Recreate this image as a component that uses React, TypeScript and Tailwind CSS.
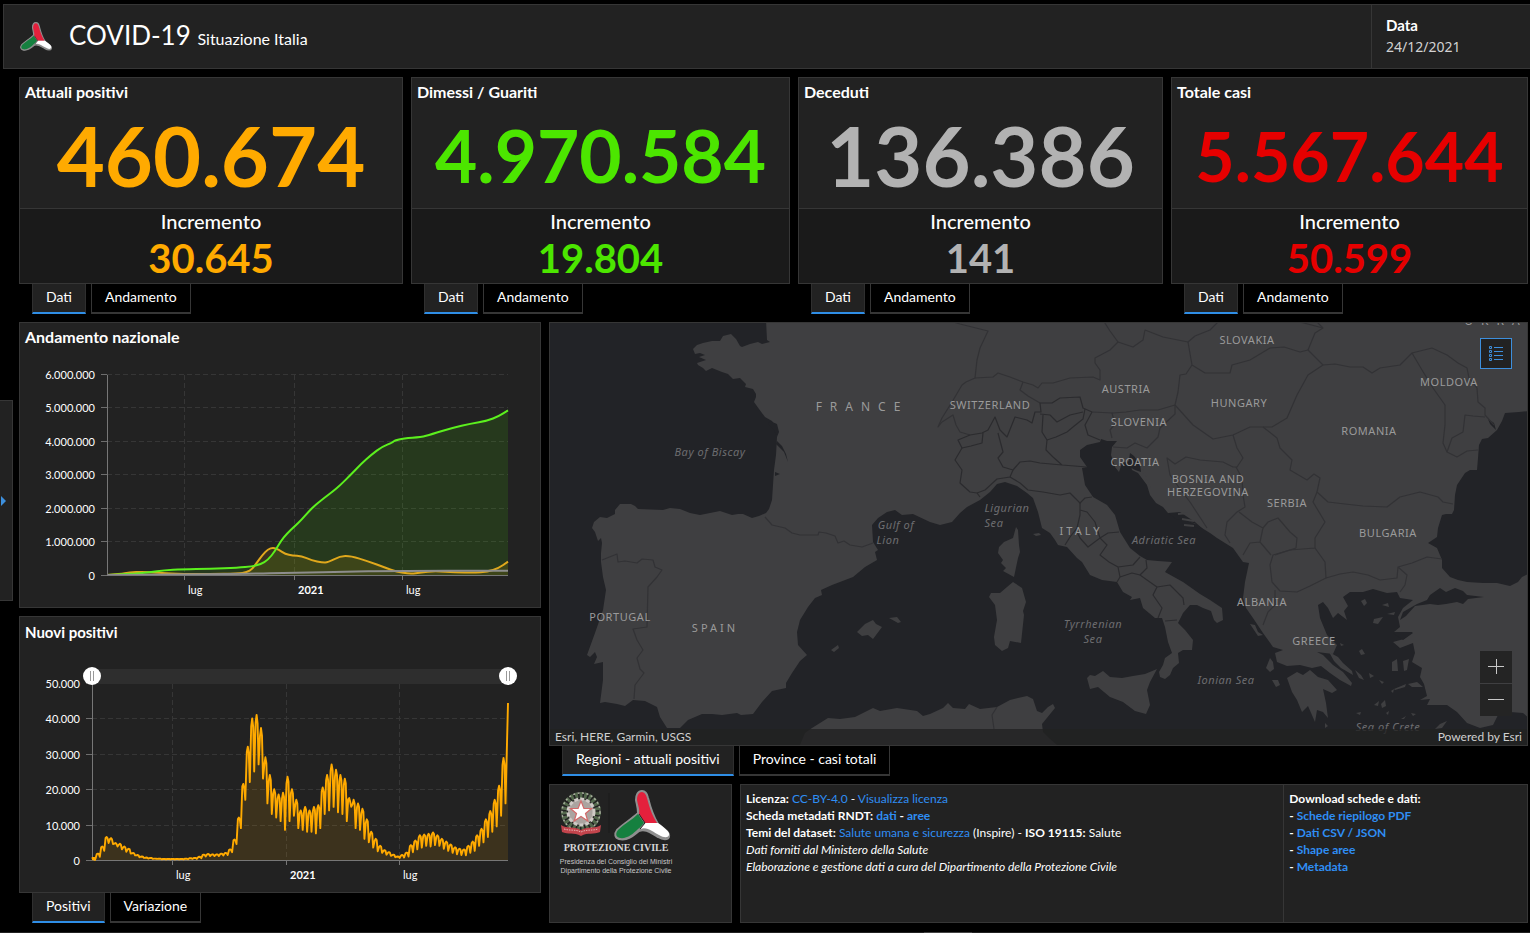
import { useState } from 'react';

interface Stat {
    title: string;
    value: string;
    increment: string;
    size: string;
    color: string;
}

interface MapLabel {
    text: string;
    x: number;
    y: number;
}

type Point = [number, number];

const stats: Stat[] = [
    { title: 'Attuali positivi', value: '460.674', increment: '30.645', size: 'text-[83px]', color: 'text-[#ffaa00]' },
    { title: 'Dimessi / Guariti', value: '4.970.584', increment: '19.804', size: 'text-[73px]', color: 'text-[#4ce600]' },
    { title: 'Deceduti', value: '136.386', increment: '141', size: 'text-[83px]', color: 'text-[#b2b2b2]' },
    { title: 'Totale casi', value: '5.567.644', increment: '50.599', size: 'text-[68px]', color: 'text-[#e60000]' },
];

// [day, millions]
const recovered: Point[] = [
    [0, 0], [37, 0.03], [72, 0.08], [95, 0.14], [125, 0.17], [172, 0.19], [218, 0.22], [242, 0.26], [256, 0.32],
    [268, 0.45], [280, 0.72], [289, 1.0], [300, 1.25], [312, 1.45], [324, 1.65], [336, 1.9], [347, 2.1], [365, 2.35],
    [376, 2.5], [388, 2.68], [406, 3.0], [423, 3.32], [441, 3.61], [458, 3.84], [476, 3.97], [479, 4.03], [494, 4.09],
    [523, 4.13], [540, 4.21], [576, 4.41], [605, 4.53], [634, 4.62], [652, 4.75], [668, 4.93],
];

const positives: Point[] = [
    [0, 0], [22, 0.03], [37, 0.08], [60, 0.1], [84, 0.07], [113, 0.03], [172, 0.03], [218, 0.04], [233, 0.08],
    [242, 0.18], [250, 0.38], [259, 0.6], [268, 0.77], [277, 0.82], [286, 0.76], [297, 0.63], [309, 0.58], [324, 0.57],
    [341, 0.44], [359, 0.37], [368, 0.38], [388, 0.56], [406, 0.57], [435, 0.41], [464, 0.22], [482, 0.1], [505, 0.03],
    [523, 0.08], [546, 0.12], [581, 0.08], [611, 0.07], [634, 0.1], [652, 0.2], [668, 0.4],
];

const deaths: Point[] = [[0, 0], [230, 0.03], [312, 0.07], [406, 0.1], [464, 0.12], [668, 0.13]];

// [weekly max, weekly min] in thousands
const weeks: Point[] = [
    [0.2, 0], [0.6, 0.3], [1.8, 0.9], [3.8, 2.6], [6.5, 4.8], [6.2, 4.5], [4.8, 3.8], [4.6, 3], [3.8, 2.3], [3.2, 1.8],
    [2, 1.3], [1.4, 0.8], [1, 0.6], [0.7, 0.4], [0.6, 0.3], [0.4, 0.3], [0.4, 0.2], [0.3, 0.2], [0.3, 0.2], [0.3, 0.2],
    [0.3, 0.2], [0.3, 0.2], [0.4, 0.2], [0.5, 0.3], [0.6, 0.3], [0.9, 0.5], [1.5, 1], [1.7, 1.1], [1.6, 1.1], [1.6, 1.1],
    [1.8, 1.3], [2, 1.4], [3, 2.2], [5.8, 4.5], [12, 9], [21.5, 17], [32, 22], [40, 25], [41, 27], [37.3, 23],
    [29, 16], [24, 13], [20, 12], [18.5, 11], [19, 8.5], [23.5, 11], [20, 12.5], [17, 9], [14, 8.5], [15, 8],
    [14, 8], [15, 7.5], [15.5, 9], [20.5, 13], [24, 14], [27, 15], [25.5, 13.5], [24, 13], [23, 11], [17.5, 15],
    [17, 9], [16, 8.5], [14.5, 6], [11.5, 5], [8, 3.5], [6, 2.5], [4, 2], [2.8, 1.5], [2.2, 1.2], [1.5, 0.8],
    [1, 0.6], [1.4, 0.7], [2.1, 1], [4.2, 2.2], [5.5, 3], [7, 3.5], [7.2, 4], [7.4, 3.8], [7.8, 4.2], [7, 4],
    [6, 3.2], [5.2, 2.6], [4.4, 2], [3.6, 1.6], [3.2, 1.4], [3, 1.3], [4, 2], [5.2, 2.6], [7, 4], [8.8, 5],
    [11.5, 6.5], [13.8, 8], [17, 9.5], [21, 12.5], [28.8, 16],
];

const toPath = (points: Point[]) => 'M' + points.map(([x, y]) => `${x.toFixed(1)},${y.toFixed(1)}`).join('L');

// Curve through the midpoints, so the slow series have no corners
const toCurve = (points: Point[]) => {
    const [first, ...rest] = points;
    const last = rest[rest.length - 1];
    const mids = rest.slice(0, -1).map(([x, y], i) => {
        const [nx, ny] = rest[i + 1];
        return `Q${x.toFixed(1)},${y.toFixed(1)} ${((x + nx) / 2).toFixed(1)},${((y + ny) / 2).toFixed(1)}`;
    });
    return `M${first[0]},${first[1]}${mids.join('')}L${last[0]},${last[1].toFixed(1)}`;
};

const scaleTrend = (points: Point[]): Point[] => points.map(([d, v]) => [87 + (d / 668) * 401, 225 - v * 33.4]);

const dailyPoints: Point[] = [];
weeks.forEach(([max, min], i) => {
    const x = Math.max(72, 68 + i * 4.41);
    const y = (v: number) => 214 - v * 3.54;
    dailyPoints.push([x, y(max * 0.85 + min * 0.15)], [x + 1, y(max)], [x + 2, y(max * 0.94)], [x + 3, y(min)]);
});
dailyPoints.push([488, 57]);

const land = {
    mainland:
        'M766,320L767,340 770,342 762,344 758,342 750,344 742,347 740,346 736,339 731,334 723,336 720,341 712,341 703,343 697,345 693,349 695,354 700,353 705,355 699,357 706,360 697,363 698,365 703,368 706,371 712,368 722,372 728,374 733,379 740,378 746,384 745,387 753,389 756,394 756,397 754,402 759,409 765,417 772,421 776,427 777,437 776,455 774,470 773,485 772,500 769,509 766,513 759,516 752,518 743,514 738,514 732,515 726,513 720,511 710,513 700,515 690,513 680,509 670,508 663,510 638,509 635,506 631,504 620,504 615,510 615,514 607,518 600,517 594,522 592,528 595,532 598,541 601,538 602,543 601,553 601,562 603,577 606,590 603,610 595,633 587,655 590,657 595,652 597,657 594,664 603,662 603,680 600,703 605,702 617,704 625,706 633,700 645,701 657,707 660,717 667,728 680,728 688,720 702,714 712,714 722,715 737,713 741,715 753,714 762,702 772,691 786,688 786,683 792,673 800,661 807,655 798,645 797,632 800,620 808,607 815,598 822,595 821,590 832,585 853,577 865,567 877,560 875,552 878,550 873,542 872,525 878,518 887,512 895,510 902,515 913,514 930,522 940,525 952,522 960,513 967,507 980,500 990,492 997,484 1005,482 1017,486 1027,493 1033,498 1038,512 1042,528 1050,533 1055,540 1058,545 1067,547 1077,558 1082,562 1090,575 1102,580 1117,582 1123,592 1132,597 1130,600 1140,598 1143,608 1155,618 1162,618 1165,627 1168,642 1172,653 1165,658 1163,665 1159,672 1160,677 1165,679 1170,675 1173,668 1179,663 1178,653 1183,650 1192,650 1193,640 1185,630 1178,623 1183,613 1190,605 1197,605 1203,608 1211,611 1214,620 1217,623 1223,620 1222,608 1210,600 1200,594 1183,582 1165,572 1172,562 1158,561 1147,560 1140,556 1130,548 1120,532 1115,515 1107,505 1093,497 1085,485 1082,468 1087,467 1080,457 1080,450 1087,445 1100,442 1101,439 1107,441 1117,441 1112,447 1111,455 1115,467 1119,472 1122,463 1130,461 1132,470 1138,473 1147,485 1150,495 1156,503 1163,507 1168,513 1180,515 1187,520 1197,525 1210,533 1217,538 1233,548 1243,562 1249,563 1245,582 1243,598 1246,608 1253,618 1263,633 1273,647 1283,650 1275,653 1277,662 1287,666 1300,665 1312,668 1321,666 1330,673 1340,680 1351,686 1352,683 1343,672 1333,665 1323,655 1317,652 1333,654 1337,645 1327,635 1320,618 1318,605 1323,602 1328,608 1333,618 1338,613 1347,620 1344,611 1348,606 1343,597 1350,592 1363,592 1373,589 1387,593 1397,592 1400,598 1413,600 1403,608 1398,617 1400,627 1394,632 1413,632 1404,639 1393,642 1400,648 1413,643 1415,653 1412,662 1422,668 1420,677 1424,684 1427,696 1420,700 1430,699 1427,705 1447,705 1457,712 1467,723 1480,728 1493,725 1498,715 1510,712 1523,713 1530,719 1530,320Z',
    peloponnese:
        'M1287,678L1297,672 1303,675 1310,670 1318,677 1328,680 1337,690 1332,693 1323,689 1326,703 1328,718 1323,712 1317,710 1315,722 1308,706 1302,712 1297,700 1292,692Z',
    africa:
        'M800,745L805,733 812,728 828,718 840,719 855,717 873,708 880,711 897,708 917,711 923,716 930,714 943,708 948,703 953,708 965,709 969,704 980,709 997,707 1010,700 1018,698 1027,696 1033,699 1037,711 1042,713 1048,707 1053,704 1055,708 1042,724 1043,732 1050,739 1057,745Z',
    corsica: 'M1016,527L1018,530 1019,545 1020,552 1018,558 1014,577 1003,571 1006,568 1001,563 1003,560 998,553 999,547 1004,542 1013,538Z',
    sardinia:
        'M1013,582L1022,588 1026,602 1023,611 1024,615 1021,643 1010,641 1008,648 1002,651 995,645 994,637 997,620 995,605 989,597 991,593 1000,593 1007,587Z',
    sicily: 'M1087,678L1090,675 1095,676 1103,671 1110,677 1122,678 1133,676 1145,674 1157,669 1150,682 1147,690 1150,705 1146,714 1135,711 1123,702 1110,697 1098,687 1090,689Z',
    balearics: 'M857,632L865,624 873,620 876,624 882,627 873,639 868,635 862,636ZM831,650L838,645 839,648 834,652ZM889,618L897,617 901,622 898,623Z',
    ionian: 'M1250,624L1255,625 1258,632 1263,635 1258,636ZM1266,668L1270,658 1273,662 1274,669 1270,672ZM1272,680L1278,680 1280,685 1276,687ZM1033,534L1039,533 1041,535 1036,536Z',
    aegean: 'M1361,601L1365,599 1367,603 1364,606ZM1382,605L1388,603 1389,607ZM1387,614L1395,612 1394,615ZM1374,619L1383,617 1378,624 1373,623ZM1340,643L1344,645 1341,646ZM1359,651L1362,649 1365,654 1361,655ZM1329,652L1338,657 1343,663 1352,671 1353,675 1341,668 1334,661ZM1392,662L1397,659 1398,671 1392,671ZM1403,661L1409,659 1407,670 1404,671ZM1355,670L1361,675 1364,680 1359,678ZM1369,673L1374,676 1370,678ZM1379,680L1384,682 1382,684ZM1394,689L1406,684 1405,687 1395,690ZM1408,684L1417,682 1423,687 1412,687ZM1374,705L1379,701 1378,706ZM1381,704L1385,700 1386,706 1382,708ZM1391,691L1394,689 1393,693ZM1356,713L1361,712 1360,715ZM1386,713L1389,711 1388,715ZM1401,719L1406,716 1404,719ZM1411,713L1416,714 1413,716ZM1435,729L1440,724 1447,721 1442,728ZM1325,723L1328,726 1325,728Z',
};

const inlandSea = {
    black: 'M1530,411L1519,412 1505,413 1502,421 1497,430 1488,438 1482,439 1479,445 1478,458 1477,470 1470,470 1465,473 1457,485 1455,495 1454,510 1452,514 1446,514 1442,515 1438,528 1437,537 1428,543 1437,548 1442,560 1442,568 1450,577 1458,580 1467,582 1483,583 1497,583 1510,586 1518,582 1522,577 1530,573Z',
    marmara: 'M1403,612L1417,604 1427,600 1430,595 1440,588 1446,592 1455,588 1463,591 1467,595 1484,597 1468,599 1463,604 1457,602 1446,604 1438,605 1430,604 1415,606 1406,616 1400,620Z',
    gulfs: 'M1130,453L1134,456 1140,464 1141,472 1135,470 1128,466ZM770,421L777,424 779,432 777,437 774,430 768,424ZM777,441L782,446 786,454 788,462 784,452 776,444ZM1168,513L1180,512 1195,522 1203,529 1192,527 1196,524 1185,520 1176,519ZM1393,633L1413,633 1403,640ZM1488,419L1494,423 1496,430 1490,424ZM775,472L780,474 775,476Z',
};

const borders = [
    'M602,560L617,554 618,562 625,561 637,563 642,559 653,560 655,567 662,570 657,577 648,587 647,627 633,629 637,640 643,650 637,658 640,669 644,673 635,685 634,699',
    'M765,517L772,525 785,528 792,533 800,535 818,535 819,532 826,533 835,536 838,543 844,541 850,545 862,547 873,543',
    'M947,320L960,324 988,331 980,348 977,360 975,378 966,382 962,385 952,402 942,418 938,427 942,422 953,415 956,425 960,432 970,435',
    'M975,378L993,377 998,373 1010,377 1023,382 1033,385 1038,388 1042,383 1053,383 1070,378 1093,377 1100,380 1100,370 1095,363 1095,358 1110,350 1118,342 1110,331 1103,320',
    'M1118,342L1133,347 1143,340 1145,330 1163,337 1188,342 1195,336 1210,330 1218,322',
    'M1188,342L1192,365 1186,374 1180,375 1178,392 1175,405 1193,425 1213,439 1233,435 1250,427 1272,427 1287,418 1297,395 1308,375 1323,365 1308,350 1300,352 1284,347 1270,348 1250,360 1232,365 1230,373 1205,373 1192,365',
    'M1308,350L1315,333 1323,328 1300,322M1315,320L1323,328',
    'M1175,405L1158,410 1140,410 1126,412 1113,413 1092,412',
    'M1323,365L1335,364 1350,367 1363,367 1372,373 1380,368 1400,365 1412,353 1432,348 1447,355 1458,363 1467,368 1469,378 1477,388 1478,402 1485,408 1485,415 1494,425M1485,417L1473,416 1465,415 1463,432 1452,438 1447,452 1457,457 1467,451 1478,450',
    'M1412,353L1422,370 1433,388 1445,405 1445,425 1443,443 1447,452',
    'M1263,427L1277,438 1280,448 1292,460 1290,470 1307,480 1314,474 1320,478 1317,492 1328,502 1345,504 1363,506 1387,507 1400,497 1420,492 1438,497 1443,502 1453,504',
    'M1317,492L1313,502 1325,522 1315,538 1315,548 1325,562 1326,578 1310,586 1297,592 1280,591 1272,582 1270,565 1273,555 1290,550 1315,548',
    'M1326,578L1340,574 1353,572 1368,575 1380,580 1397,578 1398,567 1412,563 1427,557 1442,559M1398,567L1407,575 1405,585 1400,592',
    'M1233,435L1237,448 1243,458 1237,467 1233,467 1223,462 1200,460 1186,457 1175,464 1167,458 1170,475 1180,489 1190,502 1207,528',
    'M1236,467L1242,478 1243,495 1245,507 1237,512 1227,522 1225,535 1230,543M1239,512L1252,522 1263,528 1260,542 1250,543 1243,555M1260,542L1271,555M1275,590L1275,605 1268,612 1263,625',
    'M1263,528L1268,522 1278,518 1290,532 1297,538 1296,548 1275,555',
    'M1113,447L1127,448 1135,443 1147,448 1158,437 1160,428 1175,414 1175,405M1112,438L1110,430 1115,424 1112,413',
    'M1023,382L1020,390 1028,396 1040,403M997,707L992,715 994,729',
];

const regions = [
    'M1092,412L1083,408 1080,397 1060,398 1052,403 1040,403 1041,412 1035,412 1032,423 1027,420 1015,417 1007,437 1000,430 995,417 988,430 982,433 970,435 958,440 962,448 955,460 962,470 960,483 970,492 977,493 980,497',
    'M962,448L971,446 982,443 983,433M998,433L1003,452 998,458 1003,467 1013,470 1010,477 997,479 985,490 977,493',
    'M1013,470L1020,462 1030,461 1040,463 1062,465 1087,467M1043,415L1042,432 1047,440 1046,450 1053,457 1062,465',
    'M1040,414L1050,415 1057,422 1070,415 1083,412M1047,440L1056,437 1067,432 1073,427 1083,419 1085,409M1092,412L1085,425 1088,435 1100,440',
    'M1010,477L1020,483 1028,490 1043,492 1060,495 1070,493 1080,503 1085,498 1092,497',
    'M1080,503L1080,515 1077,528 1070,537 1065,545M1080,510L1087,512 1095,522 1100,538 1088,547 1080,538 1076,530M1100,538L1108,533 1119,532',
    'M1100,538L1107,545 1100,555 1109,562 1118,567 1133,565 1140,557M1118,567L1120,577 1117,582M1120,577L1132,573 1140,575 1147,568 1146,560',
    'M1140,575L1147,580 1157,587 1170,585 1183,598 1184,605M1157,587L1153,595 1162,608 1158,618M1165,621L1177,620',
];

const countries: MapLabel[] = [
    { text: 'SWITZERLAND', x: 990, y: 409 },
    { text: 'AUSTRIA', x: 1126, y: 393 },
    { text: 'SLOVENIA', x: 1139, y: 426 },
    { text: 'CROATIA', x: 1135, y: 466 },
    { text: 'BOSNIA AND', x: 1208, y: 483 },
    { text: 'HERZEGOVINA', x: 1208, y: 496 },
    { text: 'SLOVAKIA', x: 1247, y: 344 },
    { text: 'HUNGARY', x: 1239, y: 407 },
    { text: 'ROMANIA', x: 1369, y: 435 },
    { text: 'MOLDOVA', x: 1449, y: 386 },
    { text: 'SERBIA', x: 1287, y: 507 },
    { text: 'BULGARIA', x: 1388, y: 537 },
    { text: 'ALBANIA', x: 1262, y: 606 },
    { text: 'GREECE', x: 1314, y: 645 },
    { text: 'PORTUGAL', x: 620, y: 621 },
];

const seas: MapLabel[] = [
    { text: 'Bay of Biscay', x: 710, y: 456 },
    { text: 'Gulf of', x: 896, y: 529 },
    { text: 'Lion', x: 888, y: 544 },
    { text: 'Ligurian', x: 1007, y: 512 },
    { text: 'Sea', x: 994, y: 527 },
    { text: 'Adriatic Sea', x: 1164, y: 544 },
    { text: 'Tyrrhenian', x: 1093, y: 628 },
    { text: 'Sea', x: 1093, y: 643 },
    { text: 'Ionian Sea', x: 1226, y: 684 },
    { text: 'Sea of Crete', x: 1388, y: 731 },
];

function Tabs({ items, label }: { items: string[]; label: string }) {
    const [active, setActive] = useState(0);

    return (
        <div role="tablist" aria-label={label} className="flex gap-[5px] pl-[13px]">
            {items.map((item, i) => (
                <button
                    key={item}
                    role="tab"
                    aria-selected={i === active}
                    onClick={() => setActive(i)}
                    className={`h-[30px] border-x border-b-2 px-[13px] pb-0.5 text-sm leading-5 ${
                        i === active
                            ? 'border-x-[#2f2f2f] border-b-[#2f8ee6] bg-[#222]'
                            : 'border-[#363636] bg-black'
                    }`}
                >
                    {item}
                </button>
            ))}
        </div>
    );
}

function StatCard({ stat }: { stat: Stat }) {
    return (
        <section>
            <div className="border border-[#363636] bg-[#222] text-center">
                <h2 className="px-[5px] pt-1 pb-px text-left text-base leading-5 font-bold">{stat.title}</h2>
                <p className={`leading-[105px] font-bold ${stat.size} ${stat.color}`}>{stat.value}</p>
                <div className="border-t border-[#363636] bg-[#1a1a1a]">
                    <p className="text-xl leading-6 font-medium">Incremento</p>
                    <p className={`text-[40px] leading-[50px] font-bold ${stat.color}`}>{stat.increment}</p>
                </div>
            </div>
            <Tabs items={['Dati', 'Andamento']} label={stat.title} />
        </section>
    );
}

// Three-armed star of the Protezione Civile
function StarShapes() {
    return (
        <>
            <path
                d="M28 1c-4 0-6 4-6 9 1 5 2 8 2 13C18 29 9 34 3 40c-3 4-2 8 2 9 8 2 14-3 20-8 7-3 13 3 19 6 5 3 10 3 11 0 1-4-3-7-11-13C39 26 37 20 34 8c-1-5-3-7-6-7z"
                fill="#8f8f8f"
                stroke="#8f8f8f"
                strokeWidth="2"
                strokeLinejoin="round"
            />
            <path d="M28 2c-3 0-5 3-5 8 1 6 3 9 2 14l6 9h12C38 25 36 19 33 8c-1-4-3-6-5-6z" fill="#e4203c" />
            <path d="M24 24C18 30 10 34 4 40c-3 4-2 7 2 8 7 1 13-4 18-9 3-2 4-4 6-6z" fill="#15803f" />
            <path d="M31 33h13c8 6 12 9 11 12-1 3-5 3-10 0-6-3-12-9-19-6z" fill="#fff" />
            <path d="M25 24l6 9-5 6" fill="none" stroke="#222" strokeWidth="1" />
        </>
    );
}

function DeptLogo() {
    return (
        <svg viewBox="0 0 116 86" className="w-[116px] overflow-visible" role="img" aria-label="Protezione Civile">
            <g fill="none">
                <circle cx="23" cy="23" r="17" stroke="#53684c" strokeWidth="6" strokeDasharray="3 1.6" />
                <circle cx="23" cy="23" r="19" stroke="#a9ae9e" strokeWidth="1.5" strokeDasharray="2 2.5" />
                <circle cx="23" cy="23" r="13" fill="#aaa4a0" stroke="#cfcac6" strokeWidth="3" strokeDasharray="4 2" />
            </g>
            <path d="M23 12l2.9 7.5h7.6l-6 5 2.3 7.5-6.800-4.600-6.800 4.600 2.300-7.500-6-5h7.600z" fill="#fff" stroke="#d26a6a" strokeWidth="1.2" />
            <path d="M3 36c6 4 12 1 20 5 8-4 14-1 20-5l-1 7c-6 3-12 0-19 4-7-4-13-1-19-4z" fill="#c2444c" />
            <path d="M6 40c6 2 11 0 17 3 6-3 11-1 17-3" fill="none" stroke="#e9b5b5" strokeDasharray="1.5 1" />
            <path d="M51 4v40" stroke="#1a1a1a" />
            <g transform="translate(56 1)">
                <StarShapes />
            </g>
            <text x="58" y="62" textAnchor="middle" fontSize="10" className="fill-[#d6d6d6] font-['Liberation_Serif',serif] font-bold">
                PROTEZIONE CIVILE
            </text>
            <g fontSize="7" textAnchor="middle" className="fill-[#c8c8c8] font-['Liberation_Sans_Narrow','Liberation_Sans',sans-serif]">
                <text x="58" y="75">Presidenza del Consiglio dei Ministri</text>
                <text x="58" y="84">Dipartimento della Protezione Civile</text>
            </g>
        </svg>
    );
}

function TrendChart() {
    const green = toCurve(scaleTrend(recovered));
    const orange = toCurve(scaleTrend(positives));
    const gray = toCurve(scaleTrend(deaths));
    const ticks = ['0', '1.000.000', '2.000.000', '3.000.000', '4.000.000', '5.000.000', '6.000.000'];

    return (
        <svg viewBox="0 0 520 257" className="block w-full fill-white text-[11px]" role="img" aria-label="Andamento nazionale">
            {ticks.map((tick, i) => {
                const y = 225.5 - Math.round(i * 33.5);
                return (
                    <g key={tick}>
                        <path d={`M87,${y}H488`} stroke="#363636" strokeDasharray="5 3" />
                        <path d={`M81,${y}h6`} stroke="#6e6e6e" />
                        <text x="75" y={y + 4} textAnchor="end">{tick}</text>
                    </g>
                );
            })}
            <path d="M164.5,25V225M274.5,25V225M382.5,25V225" stroke="#363636" strokeDasharray="5 3" />
            <path d={`${green}V225H87Z`} fill="#4ce600" fillOpacity="0.12" />
            <path d={`${orange}V225H87Z`} fill="#ffaa00" fillOpacity="0.11" />
            <g fill="none" strokeWidth="2" strokeLinejoin="round">
                <path d={orange} stroke="#e0a81c" />
                <path d={green} stroke="#5cf01e" />
                <path d={gray} stroke="#8d8d8d" />
            </g>
            <path d="M87.5,25V225.5H488M164.5,226v4M274.5,226v4M382.5,226v4" fill="none" stroke="#777" />
            <text x="168" y="244">lug</text>
            <text x="278" y="244" className="font-bold">2021</text>
            <text x="386" y="244">lug</text>
        </svg>
    );
}

function DailyChart() {
    const line = toPath(dailyPoints);
    const ticks = ['0', '10.000', '20.000', '30.000', '40.000', '50.000'];

    return (
        <svg viewBox="0 0 520 208" className="block w-full overflow-visible fill-white text-[11px]" role="img" aria-label="Nuovi positivi">
            <g transform="translate(0 -38)">
                {ticks.map((tick, i) => {
                    const y = 214.5 - Math.round(i * 35.4);
                    return (
                        <g key={tick}>
                            <path d={`M72,${y}H488`} stroke="#363636" strokeDasharray="5 3" />
                            <path d={`M66,${y}h6`} stroke="#6e6e6e" />
                            <text x="60" y={y + 4} textAnchor="end">{tick}</text>
                        </g>
                    );
                })}
                <path d="M152.5,38V214M266.5,38V214M379.5,38V214" stroke="#363636" strokeDasharray="5 3" />
                <path d={`${line}V214H72Z`} fill="#ffaa00" fillOpacity="0.12" />
                <path d="M72.5,38V214.5H488M152.5,215v4M266.5,215v4M379.5,215v4" fill="none" stroke="#777" />
                <path d={line} fill="none" stroke="#ffaa00" strokeWidth="1.9" strokeLinejoin="round" />
                <text x="156" y="233">lug</text>
                <text x="270" y="233" className="font-bold">2021</text>
                <text x="383" y="233">lug</text>
            </g>
        </svg>
    );
}

const thumb =
    'pointer-events-none absolute top-[-2px] left-[-9px] h-[18px] w-[calc(100%+18px)] appearance-none bg-transparent [&::-webkit-slider-thumb]:pointer-events-auto [&::-webkit-slider-thumb]:size-[18px] [&::-webkit-slider-thumb]:appearance-none [&::-webkit-slider-thumb]:rounded-full [&::-webkit-slider-thumb]:bg-white [&::-webkit-slider-thumb]:bg-[linear-gradient(to_right,transparent_7px,#999_7px,#999_8px,transparent_8px,transparent_10px,#999_10px,#999_11px,transparent_11px)] [&::-webkit-slider-thumb]:bg-[length:18px_10px] [&::-webkit-slider-thumb]:bg-no-repeat [&::-webkit-slider-thumb]:bg-center';

function RangeSlider() {
    const [from, setFrom] = useState(0);
    const [to, setTo] = useState(100);

    return (
        <div className="relative mt-[24px] mr-[32px] ml-[72px] h-[15px] bg-[#2e2e2e]">
            <input type="range" aria-label="Inizio" value={from} onChange={(e) => setFrom(Number(e.target.value))} className={thumb} />
            <input type="range" aria-label="Fine" value={to} onChange={(e) => setTo(Number(e.target.value))} className={thumb} />
        </div>
    );
}

function EuropeMap() {
    return (
        <div className="relative min-h-[320px] flex-1 overflow-hidden border border-[#363636] bg-[#222327]">
            <svg
                viewBox="550 323 977 422"
                preserveAspectRatio="xMidYMid slice"
                className="absolute inset-0 size-full font-['Noto_Sans',sans-serif] text-[11px]"
                role="img"
                aria-label="Mappa"
            >
                <g fill="#3f3f41">
                    {Object.entries(land).map(([name, d]) => (
                        <path key={name} d={d} />
                    ))}
                </g>
                <g fill="#222327">
                    {Object.entries(inlandSea).map(([name, d]) => (
                        <path key={name} d={d} />
                    ))}
                </g>
                <path d="M1142,470l5,6M1146,480l4,8M1178,514l10,-1M1182,519l12,2M1184,525l10,1" stroke="#3f3f41" strokeWidth="2" />
                <g fill="none" stroke="#323235" strokeWidth="1.2" strokeLinejoin="round">
                    {borders.map((d) => (
                        <path key={d} d={d} />
                    ))}
                </g>
                <g fill="none" stroke="#2b2b2e" strokeWidth="1.2" strokeLinejoin="round">
                    {regions.map((d) => (
                        <path key={d} d={d} />
                    ))}
                </g>
                <g textAnchor="middle" className="fill-[#9a9a9a] tracking-wider">
                    {countries.map((c) => (
                        <text key={c.text} x={c.x} y={c.y}>{c.text}</text>
                    ))}
                    <text x="715" y="632" className="tracking-[3px]">SPAIN</text>
                    <text x="1081" y="535" className="tracking-[3px]">ITALY</text>
                    <text x="862" y="411" className="text-[12px] tracking-[8px]">FRANCE</text>
                    <text x="1496" y="325" className="text-[12px] tracking-[8px]">UKRA</text>
                </g>
                <g textAnchor="middle" className="fill-[#6d6d70] tracking-wider italic">
                    {seas.map((s) => (
                        <text key={`${s.text}${s.y}`} x={s.x} y={s.y}>{s.text}</text>
                    ))}
                </g>
            </svg>
            <button aria-label="Legenda" className="absolute top-[15px] right-[15px] grid h-[31px] w-8 place-items-center border border-[#3d8fdd] bg-[#222]">
                <svg width="16" height="16" viewBox="0 0 16 16" fill="none" stroke="#3d8fdd" aria-hidden="true">
                    <path d="M6 1.5h9M6 5.5h9M6 9.5h9M6 13.5h9" />
                    <path d="M1.5 0.5h2v2h-2zM1.5 4.5h2v2h-2zM1.5 8.5h2v2h-2zM1.5 12.5h2v2h-2z" />
                </svg>
            </button>
            <div className="absolute right-[15px] bottom-[29px] flex w-8 flex-col gap-px">
                <button aria-label="Ingrandisci" className="grid h-8 place-items-center bg-[#242424]">
                    <svg width="16" height="16" viewBox="0 0 16 16" stroke="#c8c8c8" aria-hidden="true">
                        <path d="M0 7.5h16M8.5 0v15" />
                    </svg>
                </button>
                <button aria-label="Riduci" className="grid h-8 place-items-center bg-[#242424]">
                    <svg width="16" height="16" viewBox="0 0 16 16" stroke="#c8c8c8" aria-hidden="true">
                        <path d="M0 7.5h16" />
                    </svg>
                </button>
            </div>
            <div className="absolute inset-x-0 bottom-0 flex justify-between bg-[#222]/80 px-[5px] text-xs leading-4 text-[#cfcfcf]">
                <span>Esri, HERE, Garmin, USGS</span>
                <span>Powered by Esri</span>
            </div>
        </div>
    );
}

function Link({ children }: { children: string }) {
    return <a href="#" className="text-[#2f8ef4]">{children}</a>;
}

export default function App() {
    return (
        <div className="flex min-h-screen flex-col bg-black pt-1 font-['Lato',sans-serif] text-white">
            {/* Intestazione */}
            <header className="ml-[3px] flex border-y border-l border-[#363636] bg-[#222]">
                <div className="flex flex-1 items-center px-4">
                    <svg viewBox="0 0 58 51" className="w-[33px]" aria-hidden="true">
                        <StarShapes />
                    </svg>
                    <h1 className="ml-4 pb-1 text-[26px] leading-9">
                        COVID-19 <span className="text-base">Situazione Italia</span>
                    </h1>
                </div>
                <div className="w-[159px] border-l border-[#363636] px-3.5 pt-[10px] pb-[11px]">
                    <p className="text-[15px] leading-[21px] font-bold">Data</p>
                    <p className="font-['Noto_Sans',sans-serif] text-sm leading-[21px] text-[#d2d2d2]">24/12/2021</p>
                </div>
            </header>

            <div className="flex flex-1">
                <button
                    aria-label="Apri pannello"
                    className="h-[201px] w-[13px] shrink-0 self-center border border-l-0 border-[#363636] bg-[#222]"
                >
                    <svg width="6" height="10" viewBox="0 0 6 10" aria-hidden="true">
                        <path d="M1 0l5 5-5 5z" fill="#3d8fdd" />
                    </svg>
                </button>

                <main className="flex min-w-0 flex-1 flex-col gap-2 pt-2 pr-0.5 pb-[9px] pl-1.5">
                    {/* Indicatori */}
                    <div className="grid grid-cols-[384fr_379fr_365fr_357fr] gap-2">
                        {stats.map((stat) => (
                            <StatCard key={stat.title} stat={stat} />
                        ))}
                    </div>

                    <div className="grid flex-1 grid-cols-[522fr_979fr] gap-2">
                        {/* Grafici */}
                        <div className="flex flex-col gap-2">
                            <section className="border border-[#363636] bg-[#222]">
                                <h2 className="px-[5px] pt-1 pb-[3px] text-base leading-5 font-bold">Andamento nazionale</h2>
                                <TrendChart />
                            </section>
                            <section>
                                <div className="border border-[#363636] bg-[#222]">
                                    <h2 className="px-[5px] pt-[5px] pb-[3px] text-[15px] leading-5 font-bold">Nuovi positivi</h2>
                                    <RangeSlider />
                                    <DailyChart />
                                </div>
                                <Tabs items={['Positivi', 'Variazione']} label="Nuovi positivi" />
                            </section>
                        </div>

                        {/* Mappa e informazioni */}
                        <div className="flex min-w-0 flex-col gap-2">
                            <section className="flex flex-1 flex-col">
                                <EuropeMap />
                                <Tabs items={['Regioni - attuali positivi', 'Province - casi totali']} label="Mappa" />
                            </section>
                            <div className="grid grid-cols-[183fr_788fr] gap-2 text-[12px] leading-[17px]">
                                <div className="min-h-[139px] border border-[#363636] bg-[#222] px-2 pt-1">
                                    <DeptLogo />
                                </div>
                                <div className="grid grid-cols-[543fr_244fr] border border-[#363636] bg-[#222]">
                                    <div className="px-[5px] pt-[5px]">
                                        <p><b>Licenza:</b> <Link>CC-BY-4.0</Link> - <Link>Visualizza licenza</Link></p>
                                        <p className="font-bold">Scheda metadati RNDT: <Link>dati</Link> - <Link>aree</Link></p>
                                        <p>
                                            <b>Temi del dataset:</b> <Link>Salute umana e sicurezza</Link> (Inspire) - <b>ISO 19115:</b> Salute
                                        </p>
                                        <p className="italic">Dati forniti dal Ministero della Salute</p>
                                        <p className="italic">Elaborazione e gestione dati a cura del Dipartimento della Protezione Civile</p>
                                    </div>
                                    <div className="border-l border-[#363636] px-[5px] pt-[5px] font-bold">
                                        <p>Download schede e dati:</p>
                                        <ul>
                                            <li>- <Link>Schede riepilogo PDF</Link></li>
                                            <li>- <Link>Dati CSV / JSON</Link></li>
                                            <li>- <Link>Shape aree</Link></li>
                                            <li>- <Link>Metadata</Link></li>
                                        </ul>
                                    </div>
                                </div>
                            </div>
                        </div>
                    </div>
                </main>
            </div>

            <div className="h-px bg-[#222]">
                <div className="ml-[924px] h-px w-12 bg-[#444]" />
            </div>
        </div>
    );
}
